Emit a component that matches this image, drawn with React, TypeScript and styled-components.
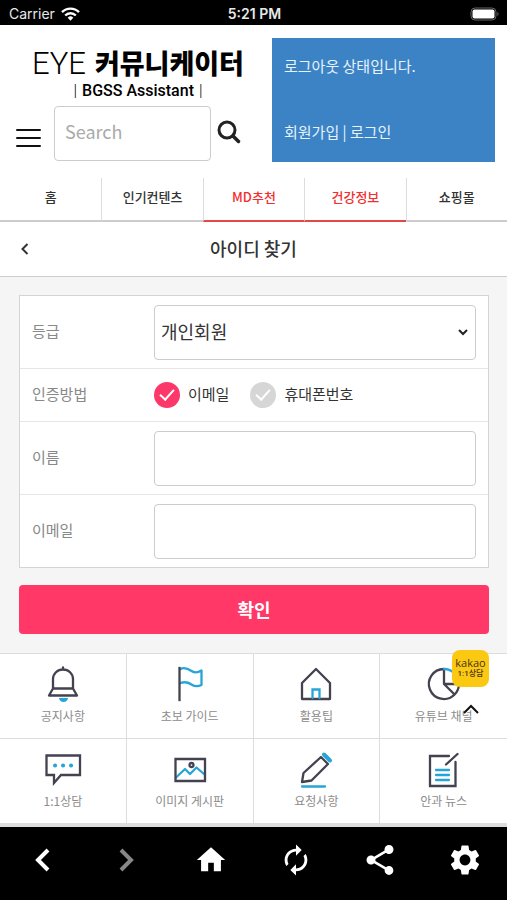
import React, { useState } from "react";
import styled, { createGlobalStyle } from "styled-components";
import { MdAutorenew, MdHome, MdSettings, MdShare } from "react-icons/md";

const sans = `"Noto Sans CJK KR", "Noto Sans", sans-serif`;
const ink = "#43424f";
const accent = "#27a5d8";

const GlobalStyle = createGlobalStyle`
  *, *::before, *::after { box-sizing: border-box; }
  body { margin: 0; background: #fff; color: #333; font-family: ${sans}; }
  button, input, select { font-family: inherit; color: inherit; margin: 0; }
  a { color: inherit; text-decoration: none; }
  svg { display: block; }
`;

const Page = styled.div`
  display: flex;
  flex-direction: column;
  min-height: 100vh;
`;

const StatusBar = styled.div`
  display: grid;
  grid-template-columns: 1fr auto 1fr;
  align-items: center;
  height: 25px;
  padding: 2px 7px 0 9px;
  background: #000;
  color: #e8e8e8;
  font: 400 14px/20px Inter, sans-serif;
`;

const Carrier = styled.span`
  display: flex;
  align-items: center;
  gap: 6px;
`;

const Clock = styled.span`
  font-weight: 600;
`;

const Battery = styled.span`
  justify-self: end;
`;

const Header = styled.header`
  display: grid;
  grid-template-columns: minmax(0, 230fr) minmax(0, 223fr);
  gap: 27px;
  padding: 13px 12px 16px 15px;
`;

const Brand = styled.div`
  display: flex;
  flex-direction: column;
  justify-content: space-between;
  padding-bottom: 1px;
`;

const Logo = styled.a`
  display: flex;
  flex-direction: column;
  align-items: center;
  padding: 8px 0 0 16px;
  color: #000;
  white-space: nowrap;
`;

const LogoName = styled.span`
  display: flex;
  align-items: center;
  gap: 9px;
  height: 34px;
  font: 900 27px/34px ${sans};
`;

const LogoThin = styled.span`
  padding-top: 2px;
  font: 300 31px/34px Roboto, sans-serif;
`;

const LogoSub = styled.span`
  display: flex;
  gap: 5px;
  padding-top: 1px;
  font: 500 16px/20px Roboto, sans-serif;
`;

const LogoBar = styled.span`
  font-weight: 300;
`;

const SearchForm = styled.form`
  display: flex;
  align-items: center;
  padding-right: 4px;
`;

const IconButton = styled.button`
  display: flex;
  flex: none;
  padding: 0;
  border: 0;
  background: none;
  cursor: pointer;
`;

const MenuButton = styled(IconButton)`
  padding-top: 9px;
  margin-right: 12px;
`;

const SearchButton = styled(IconButton)`
  padding-bottom: 4px;
  margin-left: 6px;
`;

const TextInput = styled.input`
  flex: 1;
  width: 100%;
  min-width: 0;
  height: 55px;
  padding: 0 10px 5px;
  border: 1px solid #ccc;
  border-radius: 4px;
  background: #fff;
  font-size: 18px;
  outline: none;
  &::placeholder { color: #aaa; opacity: 1; }
`;

const Account = styled.div`
  display: flex;
  flex-direction: column;
  justify-content: space-between;
  min-height: 124px;
  padding: 16px 12px 18px;
  background: #3c83c5;
  color: #e6f2fc;
  font-size: 15px;
  line-height: 24px;
`;

const Tabs = styled.nav`
  display: grid;
  grid-template-columns: repeat(5, 1fr);
`;

const Tab = styled.a<{ $hot?: boolean }>`
  height: 44px;
  border-bottom: 2px solid ${(p) => (p.$hot ? "#e34848" : "#ccc")};
  color: ${(p) => (p.$hot ? "#f22f2f" : "#333")};
  font-size: 13px;
  font-weight: 500;
  line-height: 38px;
  text-align: center;
  & + & { border-left: 1px solid #ddd; }
`;

const TitleBar = styled.div`
  display: grid;
  grid-template-columns: 24px 1fr 24px;
  align-items: center;
  height: 55px;
  padding: 0 20px;
  border-bottom: 1px solid #ccc;
`;

const Title = styled.h1`
  margin: 0;
  padding-bottom: 2px;
  font-size: 18px;
  font-weight: 500;
  line-height: 26px;
  text-align: center;
`;

const Main = styled.main`
  padding: 18px 18px 19px 19px;
  background: #f5f5f5;
`;

const Panel = styled.div`
  border: 1px solid #d4d4d4;
  background: #fff;
`;

const Row = styled.div<{ $compact?: boolean }>`
  display: grid;
  grid-template-columns: 122px minmax(0, 1fr);
  align-items: center;
  min-height: ${(p) => (p.$compact ? 53 : 73)}px;
  padding: 0 12px;
  font-size: 15px;
  &:first-child { min-height: 72px; }
  & + & { border-top: 1px solid #e6e6e6; }
`;

const RowName = styled.label`
  color: #888;
  line-height: 24px;
  padding-bottom: 3px;
`;

const SelectBox = styled.div`
  display: grid;
  align-items: center;
  & > * { grid-area: 1 / 1; }
  & > svg { justify-self: end; margin-right: 7px; pointer-events: none; }
`;

const Select = styled.select`
  width: 100%;
  height: 55px;
  padding: 0 24px 3px 6px;
  border: 1px solid #ccc;
  border-radius: 4px;
  background: #fff;
  font-size: 18px;
  appearance: none;
  outline: none;
`;

const Choices = styled.div`
  display: flex;
  gap: 21px;
`;

const Choice = styled.label`
  display: flex;
  align-items: center;
  gap: 8px;
  line-height: 26px;
  white-space: nowrap;
`;

const ChoiceText = styled.span`
  padding-bottom: 3px;
`;

const Radio = styled.input`
  display: grid;
  place-items: center;
  width: 26px;
  height: 26px;
  border-radius: 50%;
  background: #d6d6d6;
  appearance: none;
  &:checked { background: #fc376a; }
  &::after {
    content: "";
    width: 8px;
    height: 14px;
    margin-bottom: 4px;
    border: solid #fff;
    border-width: 0 2px 2px 0;
    transform: rotate(42deg);
  }
`;

const Submit = styled.button`
  width: 100%;
  height: 49px;
  margin-top: 17px;
  padding: 0 0 2px;
  border: 0;
  border-radius: 4px;
  background: #ff3868;
  color: #fff;
  font-size: 18px;
  font-weight: 700;
  cursor: pointer;
`;

const Shortcuts = styled.section`
  position: relative;
  border-bottom: 4px solid #ddd;
`;

const Tiles = styled.nav`
  display: grid;
  grid-template-columns: repeat(4, 1fr);
`;

const Tile = styled.a`
  display: flex;
  flex-direction: column;
  align-items: center;
  gap: 1px;
  padding: 11px 0 13px;
  border-top: 1px solid #ddd;
  color: #8c8c8c;
  font-size: 12px;
  line-height: 19px;
  &:not(:nth-child(4n)) { border-right: 1px solid #ddd; }
`;

const Floating = styled.div`
  position: absolute;
  top: -3px;
  right: 18px;
  display: flex;
  flex-direction: column;
  align-items: center;
  gap: 17px;
`;

const Kakao = styled.a`
  display: flex;
  flex-direction: column;
  align-items: center;
  width: 37px;
  height: 37px;
  padding-top: 7px;
  border-radius: 8px;
  background: #fcc912;
  color: #493419;
  font: 400 11px/12px "Open Sans", sans-serif;
`;

const KakaoNote = styled.span`
  font: 500 8px/10px Roboto, ${sans};
`;

const BottomBar = styled.nav`
  display: grid;
  grid-template-columns: repeat(6, 1fr);
  flex: 1;
  min-height: 73px;
  padding-bottom: 7px;
  background: #000;
`;

const BarButton = styled.button`
  display: flex;
  align-items: center;
  justify-content: center;
  padding: 0;
  border: 0;
  background: none;
  color: #fff;
  cursor: pointer;
  &:disabled { color: #888; }
`;

const TileIcon = ({ children }: { children: React.ReactNode }) => (
  <svg width="40" height="40" viewBox="0 0 40 40" fill="none" stroke={ink} strokeWidth="2.300" strokeLinejoin="round" strokeLinecap="round" aria-hidden>
    {children}
  </svg>
);

const tiles: { name: string; icon: React.ReactNode }[] = [
  {
    name: "공지사항",
    icon: (
      <>
        <path d="M20 2.500v2M10 23.500V14a10 9.500 0 0 1 20 0v9.500M10 23.500h20l4 7H6z" />
        <path d="M16 33h9a4.500 4 0 0 1-9 0z" fill={accent} stroke="none" />
      </>
    ),
  },
  {
    name: "초보 가이드",
    icon: (
      <>
        <path d="M10.500 4c4-2 8 0 11 2s6 2 10-.5v14.500c-4 2-7 1.500-10-.5s-7-3-11-1.500" stroke={accent} />
        <path d="M9.500 3v32" strokeLinecap="square" />
      </>
    ),
  },
  {
    name: "활용팁",
    icon: (
      <>
        <path d="M20 4 6 18v16h28V18z" />
        <path d="M16.500 33v-8.500h7V33" stroke={accent} strokeLinejoin="miter" />
      </>
    ),
  },
  {
    name: "유튜브 채널",
    icon: (
      <>
        <path d="M20 4a15 15 0 1 0 10.600 25.500L20 19zM20 19h15M35 19a15 15 0 0 1-4.400 10.500" />
        <path d="M20 4a15 15 0 0 1 15 15" stroke={accent} />
      </>
    ),
  },
  {
    name: "1:1상담",
    icon: (
      <>
        <path d="M3.500 5.500h33.500V25H18l-7 8v-8H3.500z" strokeLinejoin="miter" />
        <path d="M12 15.500h.1M20 15.500h.1M28 15.500h.1" stroke={accent} strokeWidth="4" />
      </>
    ),
  },
  {
    name: "이미지 게시판",
    icon: (
      <>
        <path d="m6 27.500 9-8.500 5 5 6.500-6.500 8 7" stroke={accent} />
        <path d="M5.500 9h29.500v22H5.500z" strokeLinejoin="miter" />
        <circle cx="21.500" cy="15" r="2" />
      </>
    ),
  },
  {
    name: "요청사항",
    icon: (
      <>
        <path d="m25 7 7 7-16.500 16.500-9.500 1.500 1.500-9z" />
        <path d="m28 4.500 6 6" stroke={accent} strokeWidth="4" />
        <path d="M6 36.500h23" stroke={accent} />
      </>
    ),
  },
  {
    name: "안과 뉴스",
    icon: (
      <>
        <path d="M25 6H6v30h25.500V12" strokeLinejoin="miter" />
        <path d="M12 20h13M12 25h13M12 30h13" stroke={accent} />
        <path d="M22 14.500 33.500 4" />
      </>
    ),
  },
];

const tabs = [
  { name: "홈" },
  { name: "인기컨텐츠" },
  { name: "MD추천", hot: true },
  { name: "건강정보", hot: true },
  { name: "쇼핑몰" },
];

export default function App() {
  const [method, setMethod] = useState("email");
  return (
    <Page>
      <GlobalStyle />
      <StatusBar>
        <Carrier>
          Carrier
          <svg width="19" height="14" viewBox="0 0 19 14" fill="none" stroke="#fff" strokeWidth="2.400" aria-hidden>
            <path d="M1 5.200a12 12 0 0 1 17 0M4.200 8.500a7.500 7.500 0 0 1 10.600 0" />
            <path d="M6.700 10.700a4 4 0 0 1 5.600 0L9.500 13.800z" fill="#fff" stroke="none" />
          </svg>
        </Carrier>
        <Clock>5:21 PM</Clock>
        <Battery>
          <svg width="30" height="14" viewBox="0 0 30 14" aria-hidden>
            <rect x="1" y="1" width="25" height="12" rx="4" fill="none" stroke="#666" />
            <rect x="2.500" y="2.500" width="22" height="9" rx="2" fill="#fff" />
            <path d="M27.500 5v4q2-2 0-4z" fill="#777" />
          </svg>
        </Battery>
      </StatusBar>

      <Header>
        <Brand>
          <Logo href="#">
            <LogoName>
              <LogoThin>EYE</LogoThin>
              커뮤니케이터
            </LogoName>
            <LogoSub>
              <LogoBar>|</LogoBar>
              BGSS Assistant
              <LogoBar>|</LogoBar>
            </LogoSub>
          </Logo>
          <SearchForm onSubmit={(e) => e.preventDefault()}>
            <MenuButton type="button" aria-label="메뉴">
              <svg width="27" height="20" viewBox="0 0 27 20" stroke="#111" strokeWidth="2" strokeLinecap="round">
                <path d="M2 2h23M2 10h23M2 18h23" />
              </svg>
            </MenuButton>
            <TextInput type="search" placeholder="Search" aria-label="Search" />
            <SearchButton type="submit" aria-label="검색">
              <svg width="24" height="24" viewBox="0 0 24 24" fill="none" stroke="#222">
                <circle cx="10" cy="10" r="8" strokeWidth="3" />
                <path d="m16 16 5.500 5.500" strokeWidth="3.500" strokeLinecap="round" />
              </svg>
            </SearchButton>
          </SearchForm>
        </Brand>
        <Account>
          <span>로그아웃 상태입니다.</span>
          <span>
            <a href="#">회원가입</a> | <a href="#">로그인</a>
          </span>
        </Account>
      </Header>

      <Tabs>
        {tabs.map((t) => (
          <Tab key={t.name} href="#" $hot={t.hot}>
            {t.name}
          </Tab>
        ))}
      </Tabs>

      <TitleBar>
        <IconButton aria-label="뒤로">
          <svg width="10" height="12" viewBox="0 0 10 12" fill="none" stroke="#333" strokeWidth="2">
            <path d="M7.500 1 2.500 6l5 5" />
          </svg>
        </IconButton>
        <Title>아이디 찾기</Title>
      </TitleBar>

      <Main>
        <form onSubmit={(e) => e.preventDefault()}>
          <Panel>
            <Row>
              <RowName htmlFor="grade">등급</RowName>
              <SelectBox>
                <Select id="grade">
                  <option>개인회원</option>
                </Select>
                <svg width="12" height="8" viewBox="0 0 12 8" fill="none" stroke="#222" strokeWidth="2" aria-hidden>
                  <path d="m2 2 4 4 4-4" />
                </svg>
              </SelectBox>
            </Row>
            <Row $compact>
              <RowName as="span" id="method">인증방법</RowName>
              <Choices role="radiogroup" aria-labelledby="method">
                <Choice>
                  <Radio type="radio" name="method" checked={method === "email"} onChange={() => setMethod("email")} />
                  <ChoiceText>이메일</ChoiceText>
                </Choice>
                <Choice>
                  <Radio type="radio" name="method" checked={method === "phone"} onChange={() => setMethod("phone")} />
                  <ChoiceText>휴대폰번호</ChoiceText>
                </Choice>
              </Choices>
            </Row>
            <Row>
              <RowName htmlFor="name">이름</RowName>
              <TextInput id="name" type="text" />
            </Row>
            <Row>
              <RowName htmlFor="email">이메일</RowName>
              <TextInput id="email" type="email" />
            </Row>
          </Panel>
          <Submit type="submit">확인</Submit>
        </form>
      </Main>

      <Shortcuts>
        <Tiles>
          {tiles.map((t) => (
            <Tile key={t.name} href="#">
              <TileIcon>{t.icon}</TileIcon>
              {t.name}
            </Tile>
          ))}
        </Tiles>
        <Floating>
          <Kakao href="#">
            kakao
            <KakaoNote>1:1상담</KakaoNote>
          </Kakao>
          <IconButton aria-label="맨 위로">
            <svg width="16" height="10" viewBox="0 0 16 10" fill="none" stroke="#111" strokeWidth="2">
              <path d="m1 9 7-7 7 7" />
            </svg>
          </IconButton>
        </Floating>
      </Shortcuts>

      <BottomBar>
        <BarButton aria-label="이전">
          <svg width="16" height="24" viewBox="0 0 16 24" fill="none" stroke="currentColor" strokeWidth="4">
            <path d="M14 2 4 12l10 10" />
          </svg>
        </BarButton>
        <BarButton aria-label="다음" disabled>
          <svg width="16" height="24" viewBox="0 0 16 24" fill="none" stroke="currentColor" strokeWidth="4">
            <path d="m2 2 10 10L2 22" />
          </svg>
        </BarButton>
        <BarButton aria-label="홈"><MdHome size={34} /></BarButton>
        <BarButton aria-label="새로고침"><MdAutorenew size={34} /></BarButton>
        <BarButton aria-label="공유"><MdShare size={36} /></BarButton>
        <BarButton aria-label="설정"><MdSettings size={36} /></BarButton>
      </BottomBar>
    </Page>
  );
}
